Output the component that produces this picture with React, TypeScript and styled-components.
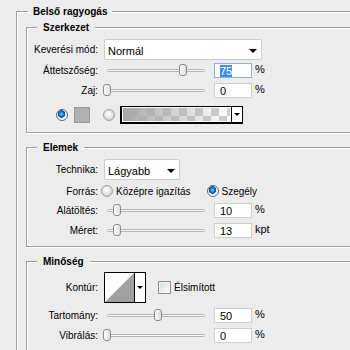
import React from 'react';
import styled, { createGlobalStyle } from 'styled-components';

const Global = createGlobalStyle`
  html, body { margin: 0; padding: 0; background: #ececec; overflow: hidden; }
  body { font-family: "Liberation Sans", Arial, sans-serif; font-size: 10px; color: #000; }
  #root { width: 350px; height: 350px; overflow: hidden; }
  * { box-sizing: border-box; }
`;

const LINE = '#9d9d9d';

const Page = styled.div`
  padding: 5px 0 0 16px;
`;

const Group = styled.section<{ $mt?: number }>`
  margin-top: ${p => p.$mt ?? 0}px;
`;

const Head = styled.div<{ $lead: number }>`
  display: flex;
  height: 13px;
  &::before {
    content: '';
    width: ${p => p.$lead}px;
    margin-top: 6px;
    border-top: 1px solid ${LINE};
    border-left: 1px solid ${LINE};
    box-shadow: inset 1px 1px 0 #fff;
  }
  &::after {
    content: '';
    flex: 1;
    margin-top: 6px;
    border-top: 1px solid ${LINE};
    box-shadow: inset 0 1px 0 #fff;
  }
`;

const Title = styled.span<{ $pad: number }>`
  font-weight: bold;
  line-height: 13px;
  padding: 0 ${p => p.$pad}px;
  white-space: nowrap;
`;

const Body = styled.div<{ $pt: number; $pb: number; $pl?: number; $closed?: boolean }>`
  border-left: 1px solid ${LINE};
  border-bottom: ${p => (p.$closed ? `1px solid ${LINE}` : 'none')};
  box-shadow: inset 1px 0 0 #fff ${p => (p.$closed ? ', 0 1px 0 #fff' : '')};
  padding: ${p => p.$pt}px 0 ${p => p.$pb}px ${p => p.$pl ?? 0}px;
`;

const Row = styled.div<{ $h: number; $mt: number }>`
  display: flex;
  align-items: center;
  height: ${p => p.$h}px;
  margin-top: ${p => p.$mt}px;
  white-space: nowrap;
`;

const Label = styled.span`
  flex: none;
  width: 71px;
  text-align: right;
`;

const Select = styled.div<{ $w: number }>`
  margin-left: 6px;
  width: ${p => p.$w}px;
  height: 21px;
  background: #fff;
  border: 1px solid #cdcdcd;
  border-radius: 2px;
  display: flex;
  align-items: center;
  justify-content: space-between;
  padding: 2px 4px 0 3px;
  font-size: 11px;
`;

const Arrow = styled.span`
  width: 0;
  height: 0;
  border-left: 4px solid transparent;
  border-right: 4px solid transparent;
  border-top: 4px solid #000;
`;

const Slider = styled.div`
  position: relative;
  margin-left: 5px;
  width: 107px;
  height: 15px;
  display: flex;
  align-items: center;
`;

const Track = styled.div`
  margin-left: 4px;
  width: 98px;
  height: 3px;
  border: 1px solid #b4b4b4;
  border-radius: 2px;
  background: #f6f6f6;
`;

const Thumb = styled.div`
  position: absolute;
  top: 1px;
  width: 8px;
  height: 12px;
  border: 1px solid #8c8c8c;
  border-radius: 3px 3px 3px 3px;
  background: linear-gradient(to right, #ffffff, #dcdcdc);
`;

const Field = styled.div<{ $focus?: boolean }>`
  margin-left: 4px;
  width: 38px;
  height: 15px;
  background: #fff;
  border: 1px solid ${p => (p.$focus ? '#8fb2dc' : '#cfcfcf')};
  display: flex;
  align-items: center;
  padding-left: 5px;
  font-size: 11px;
`;

const Selected = styled.span`
  background: #3d8ef0;
  color: #fff;
  line-height: 12px;
`;

const Unit = styled.span`
  margin-left: 3px;
  align-self: flex-start;
  margin-top: 0px;
  font-size: 11px;
`;

const Radio = styled.span<{ $on?: boolean; $ml: number }>`
  flex: none;
  margin-left: ${p => p.$ml}px;
  width: 12px;
  height: 12px;
  border-radius: 50%;
  border: 1px solid ${p => (p.$on ? '#5a6a7a' : '#a0a0a0')};
  background: ${p =>
    p.$on
      ? 'radial-gradient(circle at 45% 40%, #7ccaff 0, #1c7fd6 2px, #0b4d99 3.5px, #e8e8e8 4px, #ffffff 6px)'
      : 'radial-gradient(circle at 45% 40%, #ffffff 0, #f2f2f2 2px, #d0d0d0 6px)'};
`;

const RadioText = styled.span`
  margin-left: 3px;
`;

const Swatch = styled.span`
  margin-left: 6px;
  width: 16px;
  height: 16px;
  background: #b0b0b0;
  border: 1px solid #9a9a9a;
`;

const GradientBox = styled.div`
  margin-left: 5px;
  width: 123px;
  height: 18px;
  border: 1px solid #000;
  border-width: 1px 1px 2px 2px;
  display: flex;
  background: #fff;
`;

const GradientFill = styled.div`
  flex: 1;
  border: 1px solid #fff;
  background:
    linear-gradient(to right, rgba(168,168,168,1), rgba(168,168,168,0)),
    repeating-conic-gradient(#cfcfcf 0 25%, #ffffff 0 50%) 0 0 / 16px 16px;
`;

const DropPart = styled.div`
  width: 11px;
  border-left: 1px solid #000;
  display: flex;
  align-items: center;
  justify-content: center;
  background: #fff;
`;

const SmallArrow = styled.span`
  width: 0;
  height: 0;
  border-left: 3px solid transparent;
  border-right: 3px solid transparent;
  border-top: 3px solid #000;
`;

const ContourBox = styled.div`
  margin-left: 6px;
  width: 42px;
  height: 31px;
  border: 1px solid #000;
  display: flex;
  background: #fff;
`;

const ContourArt = styled.svg`
  display: block;
  width: 29px;
  height: 29px;
`;

const Check = styled.span`
  margin-left: 12px;
  width: 13px;
  height: 13px;
  border: 1px solid #8e8e8e;
  background: linear-gradient(135deg, #d8d8d8, #ffffff);
  box-shadow: inset 0 0 0 1px #f4f4f4;
`;

const CheckText = styled.span`
  margin-left: 3px;
`;

type SliderRowProps = {
  label: string;
  pos: number;
  value: React.ReactNode;
  unit: string;
  h: number;
  mt: number;
  focus?: boolean;
};

function SliderRow({ label, pos, value, unit, h, mt, focus }: SliderRowProps) {
  return (
    <Row $h={h} $mt={mt}>
      <Label>{label}</Label>
      <Slider>
        <Track />
        <Thumb style={{ left: pos }} />
      </Slider>
      <Field $focus={focus}>{value}</Field>
      <Unit>{unit}</Unit>
    </Row>
  );
}

export default function App() {
  return (
    <>
      <Global />
      <Page>
        <Group>
          <Head $lead={11}>
            <Title $pad={5}>Belső ragyogás</Title>
          </Head>
          <Body $pt={3} $pb={0} $pl={9}>
            <Group>
              <Head $lead={10}>
                <Title $pad={6}>Szerkezet</Title>
              </Head>
              <Body $pt={5} $pb={8} $closed>
                <Row $h={21} $mt={0}>
                  <Label>Keverési mód:</Label>
                  <Select $w={158}>
                    <span>Normál</span>
                    <Arrow />
                  </Select>
                </Row>
                <SliderRow label="Áttetszőség:" pos={76} value={<Selected>75</Selected>} unit="%" h={15} mt={3} focus />
                <SliderRow label="Zaj:" pos={0} value="0" unit="%" h={15} mt={5} />
                <Row $h={18} $mt={8}>
                  <Radio $on $ml={29} />
                  <Swatch />
                  <Radio $ml={13} />
                  <GradientBox>
                    <GradientFill />
                    <DropPart>
                      <SmallArrow />
                    </DropPart>
                  </GradientBox>
                </Row>
              </Body>
            </Group>

            <Group $mt={8}>
              <Head $lead={10}>
                <Title $pad={6}>Elemek</Title>
              </Head>
              <Body $pt={5} $pb={8} $closed>
                <Row $h={21} $mt={0}>
                  <Label>Technika:</Label>
                  <Select $w={76}>
                    <span>Lágyabb</span>
                    <Arrow />
                  </Select>
                </Row>
                <Row $h={18} $mt={2}>
                  <Label>Forrás:</Label>
                  <Radio $ml={3} />
                  <RadioText>Középre igazítás</RadioText>
                  <Radio $on $ml={16} />
                  <RadioText>Szegély</RadioText>
                </Row>
                <SliderRow label="Alátöltés:" pos={10} value="10" unit="%" h={15} mt={3} />
                <SliderRow label="Méret:" pos={10} value="13" unit="kpt" h={15} mt={5} />
              </Body>
            </Group>

            <Group $mt={8}>
              <Head $lead={10}>
                <Title $pad={6}>Minőség</Title>
              </Head>
              <Body $pt={4} $pb={10}>
                <Row $h={31} $mt={0}>
                  <Label>Kontúr:</Label>
                  <ContourBox>
                    <ContourArt viewBox="0 0 29 29">
                      <polygon points="0,29 29,0 29,29" fill="#a0a0a0" />
                    </ContourArt>
                    <DropPart>
                      <SmallArrow />
                    </DropPart>
                  </ContourBox>
                  <Check />
                  <CheckText>Élsimított</CheckText>
                </Row>
                <SliderRow label="Tartomány:" pos={51} value="50" unit="%" h={15} mt={5} />
                <SliderRow label="Vibrálás:" pos={0} value="0" unit="%" h={15} mt={5} />
              </Body>
            </Group>
          </Body>
        </Group>
      </Page>
    </>
  );
}
